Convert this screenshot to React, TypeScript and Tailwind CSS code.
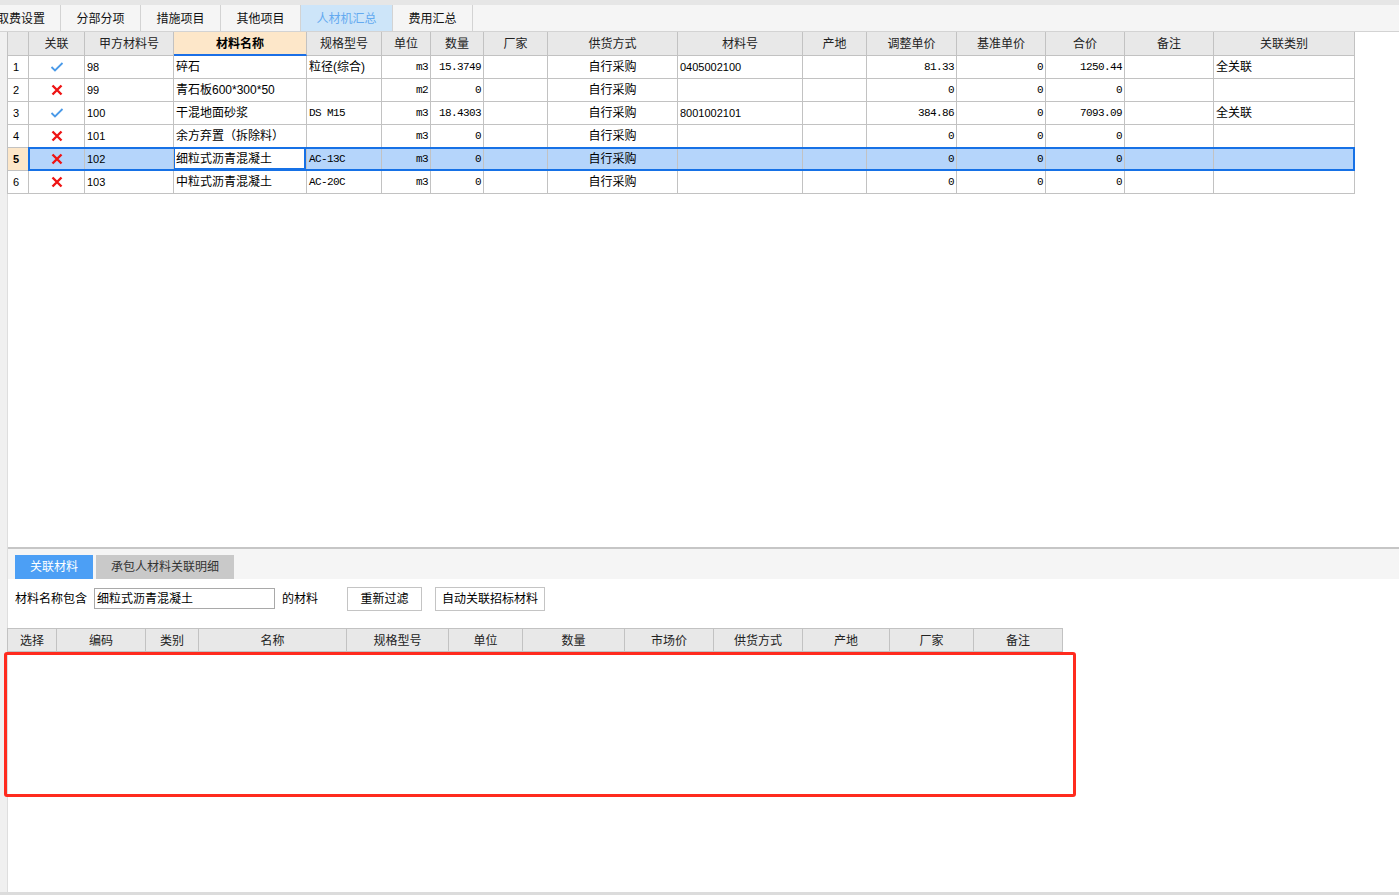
import React from 'react';

const CJK = "[font-family:'Liberation_Sans','Noto_Sans_CJK_SC',sans-serif] text-[12px]";
const NUM = "[font-family:'Liberation_Sans','Noto_Sans_CJK_SC',sans-serif] text-[11px]";
const MONO = "[font-family:'Liberation_Mono','Noto_Sans_CJK_SC',monospace] text-[11px] tracking-[-0.6px]";

type Col = { w: string; label: string; align: string; font: 'cjk' | 'num' | 'mono' | 'auto' };

const MAIN_COLS: Col[] = [
  { w: 'w-[21px]', label: '', align: 'justify-start pl-[5px]', font: 'num' },
  { w: 'w-[56px]', label: '关联', align: 'justify-center', font: 'cjk' },
  { w: 'w-[89px]', label: '甲方材料号', align: 'justify-start pl-[2px]', font: 'num' },
  { w: 'w-[133px]', label: '材料名称', align: 'justify-start pl-[2px]', font: 'cjk' },
  { w: 'w-[75px]', label: '规格型号', align: 'justify-start pl-[2px]', font: 'auto' },
  { w: 'w-[49px]', label: '单位', align: 'justify-end pr-[2px]', font: 'mono' },
  { w: 'w-[53px]', label: '数量', align: 'justify-end pr-[2px]', font: 'mono' },
  { w: 'w-[64px]', label: '厂家', align: 'justify-start pl-[2px]', font: 'cjk' },
  { w: 'w-[130px]', label: '供货方式', align: 'justify-center', font: 'cjk' },
  { w: 'w-[125px]', label: '材料号', align: 'justify-start pl-[2px]', font: 'num' },
  { w: 'w-[64px]', label: '产地', align: 'justify-start pl-[2px]', font: 'cjk' },
  { w: 'w-[90px]', label: '调整单价', align: 'justify-end pr-[2px]', font: 'mono' },
  { w: 'w-[89px]', label: '基准单价', align: 'justify-end pr-[2px]', font: 'mono' },
  { w: 'w-[79px]', label: '合价', align: 'justify-end pr-[2px]', font: 'mono' },
  { w: 'w-[89px]', label: '备注', align: 'justify-start pl-[2px]', font: 'cjk' },
  { w: 'w-[141px]', label: '关联类别', align: 'justify-start pl-[2px]', font: 'cjk' },
];

const ROWS: { ok: boolean; cells: string[] }[] = [
  { ok: true, cells: ['98', '碎石', '粒径(综合)', 'm3', '15.3749', '', '自行采购', '0405002100', '', '81.33', '0', '1250.44', '', '全关联'] },
  { ok: false, cells: ['99', '青石板600*300*50', '', 'm2', '0', '', '自行采购', '', '', '0', '0', '0', '', ''] },
  { ok: true, cells: ['100', '干混地面砂浆', 'DS M15', 'm3', '18.4303', '', '自行采购', '8001002101', '', '384.86', '0', '7093.09', '', '全关联'] },
  { ok: false, cells: ['101', '余方弃置（拆除料）', '', 'm3', '0', '', '自行采购', '', '', '0', '0', '0', '', ''] },
  { ok: false, cells: ['102', '细粒式沥青混凝土', 'AC-13C', 'm3', '0', '', '自行采购', '', '', '0', '0', '0', '', ''] },
  { ok: false, cells: ['103', '中粒式沥青混凝土', 'AC-20C', 'm3', '0', '', '自行采购', '', '', '0', '0', '0', '', ''] },
];

const SUB_COLS = [
  { w: 'w-[49px]', label: '选择' },
  { w: 'w-[89px]', label: '编码' },
  { w: 'w-[53px]', label: '类别' },
  { w: 'w-[148px]', label: '名称' },
  { w: 'w-[102px]', label: '规格型号' },
  { w: 'w-[74px]', label: '单位' },
  { w: 'w-[102px]', label: '数量' },
  { w: 'w-[89px]', label: '市场价' },
  { w: 'w-[89px]', label: '供货方式' },
  { w: 'w-[87px]', label: '产地' },
  { w: 'w-[84px]', label: '厂家' },
  { w: 'w-[89px]', label: '备注' },
];

const TABS = [
  { label: '取费设置', cls: 'w-[79px] -ml-[18px]' },
  { label: '分部分项', cls: 'w-[80px]' },
  { label: '措施项目', cls: 'w-[80px]' },
  { label: '其他项目', cls: 'w-[80px]' },
  { label: '人材机汇总', cls: 'w-[92px]', active: true },
  { label: '费用汇总', cls: 'w-[80px]' },
];

function fontFor(col: Col, text: string) {
  if (col.font === 'cjk') return CJK;
  if (col.font === 'num') return NUM;
  if (col.font === 'mono') return MONO;
  return /[\u4e00-\u9fff]/.test(text) ? CJK : MONO;
}

function Check() {
  return (
    <svg width="14" height="12" viewBox="0 0 14 12">
      <polyline points="1.5,6 5,9.5 12.5,2" fill="none" stroke="#4a9ae8" strokeWidth="1.8" />
    </svg>
  );
}

function Cross() {
  return (
    <svg width="12" height="12" viewBox="0 0 12 12">
      <path d="M1.5 1.5 L10.5 10.5 M10.5 1.5 L1.5 10.5" stroke="#ee1414" strokeWidth="2.4" />
    </svg>
  );
}

function MainTable() {
  return (
    <div className="flex flex-col -ml-px w-[1348px] text-black">
      <div className="flex h-[24px] border-l border-[#c2c2c2]">
        {MAIN_COLS.map((c, i) => (
          <div
            key={i}
            className={`${c.w} ${CJK} flex items-center justify-center pt-px border-r border-[#c2c2c2] ${
              i === 3 ? 'bg-[#fde7c9] font-bold border-b-2 border-b-[#1b6fe6]' : 'bg-[#e8e8e8] border-b text-[#222]'
            }`}
          >
            {c.label}
          </div>
        ))}
      </div>
      {ROWS.map((r, ri) => {
        const sel = ri === 4;
        return (
          <div key={ri} className="flex h-[23px] border-l border-[#c2c2c2]">
            <div
              className={`w-[21px] ${NUM} flex items-center pl-[5px] border-r border-b border-[#c2c2c2] ${
                sel ? 'bg-[#fde7c9] font-bold' : 'bg-white'
              }`}
            >
              {ri + 1}
            </div>
            <div className={`relative flex ${sel ? 'bg-[#b5d5fb]' : 'bg-white'}`}>
              <div className="w-[56px] flex items-center justify-center border-r border-b border-[#c2c2c2]">
                {r.ok ? <Check /> : <Cross />}
              </div>
              {r.cells.map((t, ci) => {
                const col = MAIN_COLS[ci + 2];
                const active = sel && ci === 1;
                return (
                  <div
                    key={ci}
                    className={`relative ${col.w} ${col.align} ${fontFor(col, t)} flex items-center whitespace-nowrap overflow-hidden border-r border-b border-[#c2c2c2] ${
                      active ? 'bg-white' : ''
                    }`}
                  >
                    {t}
                    {active && <div className="absolute -top-px -left-px right-0 bottom-0 border-2 border-[#1671e6]" />}
                  </div>
                );
              })}
              {sel && <div className="absolute -top-px -left-px right-0 bottom-0 border-2 border-[#1671e6] pointer-events-none" />}
            </div>
          </div>
        );
      })}
    </div>
  );
}

export default function App() {
  return (
    <div className={`w-[1399px] h-[895px] overflow-hidden bg-white flex flex-col ${CJK} text-black`}>
      <div className="h-[5px] bg-[#e6e6e6]" />
      <div className="h-[27px] flex bg-[#f5f5f5] border-b border-[#d3d3d3]">
        {TABS.map((t, i) => (
          <div
            key={i}
            className={`${t.cls} shrink-0 flex items-center justify-center pt-[2px] border-r border-[#d3d3d3] ${
              t.active ? 'bg-[#cde5f9] text-[#64aaf0]' : 'text-[#111]'
            }`}
          >
            {t.label}
          </div>
        ))}
      </div>

      <div className="flex-1 flex min-h-0">
        <div className="w-[7px] bg-[#f0f0f0]" />
        <div className="flex-1 flex flex-col border-l border-[#dedede]">
          <div className="h-[515px] bg-white">
            <MainTable />
          </div>
          <div className="h-[2px] bg-[#c6c6c6]" />
          <div className="h-[30px] bg-[#f5f5f5] flex items-end pl-[7px] gap-[3px]">
            <div className="w-[78px] h-[24px] bg-[#4c9ff5] text-white flex items-center justify-center">关联材料</div>
            <div className="w-[138px] h-[24px] bg-[#c9c9c9] text-[#333] flex items-center justify-center">承包人材料关联明细</div>
          </div>
          <div className="mt-[7px] h-[24px] flex items-center pl-[7px] pt-px">
            <span>材料名称包含</span>
            <div className="ml-[7px] w-[181px] h-[21px] border border-[#a9a9a9] flex items-center pl-[2px] bg-white">细粒式沥青混凝土</div>
            <span className="ml-[7px]">的材料</span>
            <div className="ml-[29px] w-[75px] h-[24px] border border-[#c4c4c4] bg-white flex items-center justify-center">重新过滤</div>
            <div className="ml-[13px] w-[110px] h-[24px] border border-[#c4c4c4] bg-white flex items-center justify-center">自动关联招标材料</div>
          </div>
          <div className="mt-[18px] flex h-[24px] -ml-px w-[1056px] border-l border-t border-b border-[#c2c2c2] bg-[#e8e8e8]">
            {SUB_COLS.map((c, i) => (
              <div key={i} className={`${c.w} flex items-center justify-center pt-px border-r border-[#c2c2c2] text-[#222]`}>
                {c.label}
              </div>
            ))}
          </div>
          <div className="-ml-[4px] w-[1072px] h-[145px] border-[3px] border-[#ff2b1e] rounded-[3px]" />
        </div>
      </div>
      <div className="h-[3px] bg-[#dcdcdc]" />
    </div>
  );
}
